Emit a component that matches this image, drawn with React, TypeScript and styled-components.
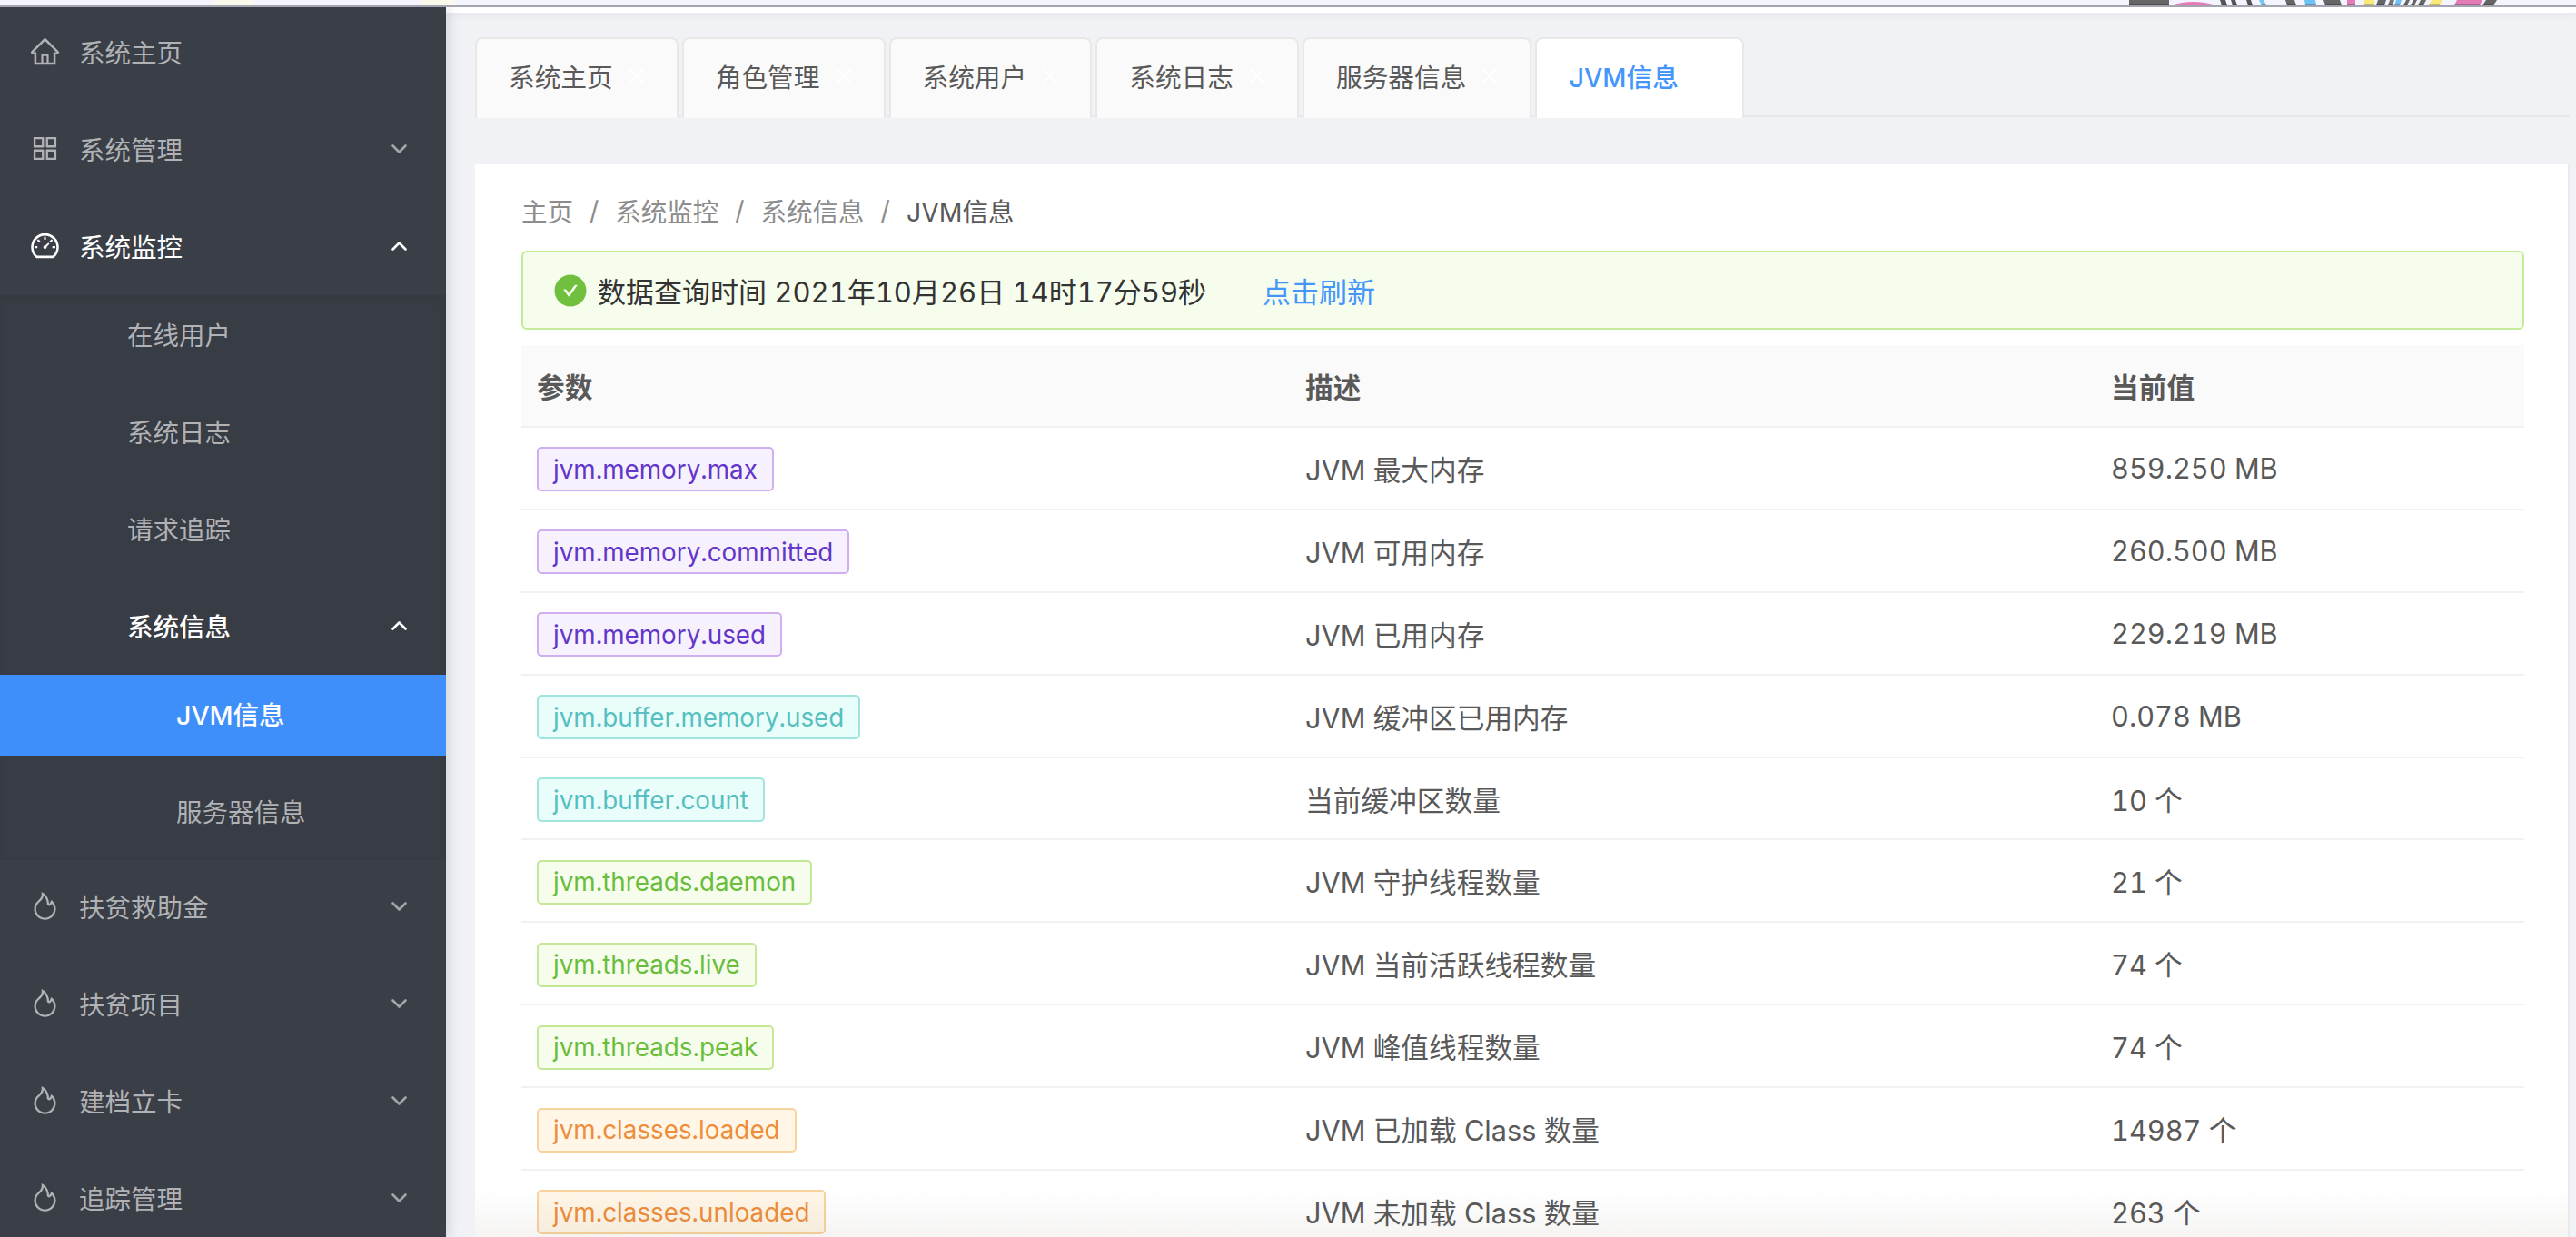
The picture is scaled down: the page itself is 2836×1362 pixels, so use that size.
import React from "react";
import styled, { createGlobalStyle } from "styled-components";
import {
  AiOutlineHome,
  AiOutlineAppstore,
  AiOutlineDashboard,
  AiOutlineFire,
  AiOutlineClose,
  AiFillCheckCircle,
} from "react-icons/ai";

const GlobalStyle = createGlobalStyle`
  html, body { margin: 0; padding: 0; height: 100%; overflow: hidden; }
  body {
    font-family: Inter, "Noto Sans CJK SC", sans-serif;
    font-variant-numeric: tabular-nums;
    background: #f0f2f5;
  }
  * { box-sizing: border-box; }
`;

const Page = styled.div`
  width: 2836px;
  height: 1362px;
  display: flex;
  flex-direction: column;
  overflow: hidden;
`;

const TopStrip = styled.div`
  position: relative;
  height: 8px;
  flex: none;
  border-bottom: 2px solid #a5a5b2;
  background:
    linear-gradient(90deg, transparent 232px, #fbf9ea 240px, #fbf9ea 275px, transparent 282px),
    linear-gradient(90deg, transparent 460px, #fbf9ea 466px, #fbf9ea 498px, transparent 504px),
    #f4f4fe;
  z-index: 3;
`;

const StripArt = styled.svg`
  position: absolute;
  left: 2330px;
  top: 0;
  width: 430px;
  height: 8px;
  display: block;
`;

const Body = styled.div`
  flex: 1;
  min-height: 0;
  display: flex;
`;

const Sidebar = styled.aside`
  width: 491px;
  flex: none;
  background: #3a3e46;
  padding-top: 6px;
  box-shadow: 4px 0 12px rgba(0, 21, 41, 0.12);
  position: relative;
  z-index: 2;
  overflow: hidden;
  font-size: 28.5px;
`;

const Row = styled.div<{ $level?: number; $active?: boolean; $tight?: boolean; $selected?: boolean }>`
  height: 89px;
  display: flex;
  align-items: center;
  padding-left: ${(p) => (p.$level === 3 ? 194 : p.$level === 2 ? 140 : 31)}px;
  padding-right: 43px;
  padding-bottom: 4px;
  margin-bottom: ${(p) => (p.$tight ? 8 : 18)}px;
  color: ${(p) => (p.$active || p.$selected ? "#ffffff" : "#b1b2b5")};
  background: ${(p) => (p.$selected ? "#3e8ffa" : "transparent")};
  font-weight: ${(p) => (p.$selected || (p.$active && p.$level === 2) ? 500 : 400)};
  white-space: nowrap;
`;

const RowIcon = styled.span`
  width: 36px;
  height: 36px;
  margin-right: 20px;
  flex: none;
  display: flex;
  align-items: center;
  justify-content: center;
  font-size: 35px;
`;

const RowLabel = styled.span`
  flex: 1;
`;

const Chevron = styled.svg<{ $up?: boolean; $bright?: boolean }>`
  width: 17px;
  height: 10px;
  flex: none;
  transform: ${(p) => (p.$up ? "rotate(180deg)" : "none")};
  fill: none;
  stroke: ${(p) => (p.$bright ? "#ffffff" : "#a3a5a9")};
  stroke-width: 2.6;
  stroke-linecap: round;
  stroke-linejoin: round;
`;

const SubMenu = styled.div`
  display: flow-root;
  background: #383c44;
  margin-bottom: 8px;
  box-shadow: inset 0 4px 8px rgba(0, 0, 0, 0.06);
`;

const Main = styled.main`
  flex: 1;
  min-width: 0;
  padding: 0 7px 0 32px;
  position: relative;
`;

const HeaderEdge = styled.div`
  height: 6px;
  margin: 0 -7px 27px -32px;
  background: #fff;
  box-shadow: 0 3px 8px rgba(0, 21, 41, 0.06);
`;

const TabBar = styled.div`
  height: 88px;
  display: flex;
  gap: 4px;
  border-bottom: 2px solid #e8e9eb;
`;

const Tab = styled.div<{ $active?: boolean }>`
  position: relative;
  height: 89px;
  flex: none;
  display: flex;
  align-items: center;
  padding: 0 32px 6px 35px;
  border: 2px solid #e8e8e8;
  border-bottom: none;
  border-radius: 8px 8px 0 0;
  background: ${(p) => (p.$active ? "#fff" : "#fafafa")};
  color: ${(p) => (p.$active ? "#4596fb" : "#595959")};
  font-size: 28.7px;
  font-weight: ${(p) => (p.$active ? 500 : 400)};
  white-space: nowrap;
`;

const TabClose = styled.span`
  margin-left: 14px;
  width: 24px;
  height: 24px;
  display: flex;
  align-items: center;
  justify-content: center;
  color: #fff;
  font-size: 24px;
`;

const Card = styled.section`
  position: relative;
  margin-top: 52px;
  height: 1200px;
  background: #fff;
  border-right: 2px solid #e9eaec;
  padding: 32px 48px 0 51px;
`;

const Breadcrumb = styled.nav`
  height: 40px;
  margin-bottom: 23px;
  padding-bottom: 4px;
  display: flex;
  align-items: center;
  font-size: 28.5px;
  color: #8c8c8c;
`;

const Crumb = styled.span<{ $current?: boolean }>`
  color: ${(p) => (p.$current ? "#595959" : "#8c8c8c")};
`;

const Slash = styled.span`
  margin: 0 18px;
  color: #8c8c8c;
`;

const Alert = styled.div`
  height: 87px;
  display: flex;
  align-items: center;
  padding-left: 32px;
  border: 2px solid #c5ea98;
  border-radius: 6px;
  background: #f6fded;
  color: #333;
  font-size: 31px;
  white-space: nowrap;
`;

const AlertIcon = styled.span`
  width: 40px;
  height: 40px;
  margin-right: 10px;
  flex: none;
  display: flex;
  align-items: center;
  justify-content: center;
  color: #70bf3e;
  font-size: 40px;
`;

const RefreshLink = styled.a`
  margin-left: 62px;
  color: #4596fb;
  font-size: 31px;
`;

const Table = styled.div`
  margin-top: 17px;
  font-size: 30.7px;
  color: #595959;
`;

const TableRow = styled.div<{ $head?: boolean }>`
  display: grid;
  grid-template-columns: 846px 887px 1fr;
  align-items: center;
  height: ${(p) => (p.$head ? "91px" : "90.9px")};
  padding-left: 17px;
  border-bottom: 2px solid #f1f1f2;
  background: ${(p) => (p.$head ? "#fafafa" : "transparent")};
  font-weight: ${(p) => (p.$head ? 600 : 400)};
  white-space: nowrap;
`;

const toneMap = {
  purple: { fg: "#6236c8", line: "#d0aef0", bg: "#f7f1fe" },
  cyan: { fg: "#56bfc0", line: "#9fe5dd", bg: "#e9fdfb" },
  green: { fg: "#6abd3c", line: "#c3e997", bg: "#f6fded" },
  orange: { fg: "#ee8e3c", line: "#f9d39d", bg: "#fff6e8" },
};
type Tone = keyof typeof toneMap;

const Tag = styled.span<{ $tone: Tone }>`
  display: inline-flex;
  align-items: center;
  justify-self: start;
  height: 49px;
  margin-top: 3px;
  padding: 0 16px;
  border: 2px solid ${(p) => toneMap[p.$tone].line};
  border-radius: 5px;
  background: ${(p) => toneMap[p.$tone].bg};
  color: ${(p) => toneMap[p.$tone].fg};
  font-size: 27.8px;
`;

const BottomFade = styled.div`
  position: absolute;
  left: 0;
  right: 0;
  top: 1129px;
  height: 52px;
  background: linear-gradient(rgba(60, 40, 20, 0), rgba(60, 40, 20, 0.05));
  pointer-events: none;
`;

const stripes: [number, number, number, string][] = [
  [14, 58, 0, "#666"], [116, 122, -2, "#555"], [128, 133, -2, "#555"], [145, 150, -2, "#555"],
  [160, 165, -3, "#74c4f4"], [188, 198, -2, "#666"], [208, 220, -1, "#6fc2f4"], [230, 248, -2, "#666"],
  [254, 263, 0, "#e37cb4"], [273, 284, 0, "#f9e978"], [286, 295, 2, "#666"], [299, 304, 2, "#777"],
  [306, 312, 2, "#6fc2f4"], [316, 320, 3, "#666"], [324, 328, 3, "#666"], [332, 338, 3, "#666"],
  [344, 356, 3, "#f9e978"], [372, 400, 3, "#e37cb4"], [403, 415, 4, "#666"],
];

const tabs = ["系统主页", "角色管理", "系统用户", "系统日志", "服务器信息"];

const rows: { name: string; tone: Tone; desc: string; value: string }[] = [
  { name: "jvm.memory.max", tone: "purple", desc: "JVM 最大内存", value: "859.250 MB" },
  { name: "jvm.memory.committed", tone: "purple", desc: "JVM 可用内存", value: "260.500 MB" },
  { name: "jvm.memory.used", tone: "purple", desc: "JVM 已用内存", value: "229.219 MB" },
  { name: "jvm.buffer.memory.used", tone: "cyan", desc: "JVM 缓冲区已用内存", value: "0.078 MB" },
  { name: "jvm.buffer.count", tone: "cyan", desc: "当前缓冲区数量", value: "10 个" },
  { name: "jvm.threads.daemon", tone: "green", desc: "JVM 守护线程数量", value: "21 个" },
  { name: "jvm.threads.live", tone: "green", desc: "JVM 当前活跃线程数量", value: "74 个" },
  { name: "jvm.threads.peak", tone: "green", desc: "JVM 峰值线程数量", value: "74 个" },
  { name: "jvm.classes.loaded", tone: "orange", desc: "JVM 已加载 Class 数量", value: "14987 个" },
  { name: "jvm.classes.unloaded", tone: "orange", desc: "JVM 未加载 Class 数量", value: "263 个" },
];

const Arrow = ({ up, bright }: { up?: boolean; bright?: boolean }) => (
  <Chevron viewBox="0 0 17 10" $up={up} $bright={bright}>
    <polyline points="1.5,1.5 8.5,8.5 15.5,1.5" />
  </Chevron>
);

const NavRow = ({
  icon,
  label,
  open,
  closed,
  active,
}: {
  icon: React.ReactNode;
  label: string;
  open?: boolean;
  closed?: boolean;
  active?: boolean;
}) => (
  <Row $active={active} $tight={open}>
    <RowIcon>{icon}</RowIcon>
    <RowLabel>{label}</RowLabel>
    {(open || closed) && <Arrow up={open} bright={open} />}
  </Row>
);

export default function App() {
  return (
    <Page>
      <GlobalStyle />
      <TopStrip>
        <StripArt viewBox="0 0 430 8" preserveAspectRatio="none">
          {stripes.map(([a, b, s, c], i) => (
            <g key={i}>
              <polygon points={`${a + s},0 ${b + s},0 ${b},6 ${a},6`} fill={c} />
              <rect x={a} y="4.5" width={b - a} height="1.5" fill="#000" opacity="0.45" />
            </g>
          ))}
          <path d="M60 6 Q84 -2 110 6 Z" fill="#e37cb4" />
        </StripArt>
      </TopStrip>
      <Body>
        <Sidebar>
          <NavRow icon={<AiOutlineHome />} label="系统主页" />
          <NavRow icon={<AiOutlineAppstore />} label="系统管理" closed />
          <NavRow icon={<AiOutlineDashboard />} label="系统监控" open active />
          <SubMenu>
            <Row $level={2}>在线用户</Row>
            <Row $level={2}>系统日志</Row>
            <Row $level={2}>请求追踪</Row>
            <Row $level={2} $active $tight>
              <RowLabel>系统信息</RowLabel>
              <Arrow up bright />
            </Row>
            <Row $level={3} $selected>JVM信息</Row>
            <Row $level={3} $tight>服务器信息</Row>
          </SubMenu>
          <NavRow icon={<AiOutlineFire />} label="扶贫救助金" closed />
          <NavRow icon={<AiOutlineFire />} label="扶贫项目" closed />
          <NavRow icon={<AiOutlineFire />} label="建档立卡" closed />
          <NavRow icon={<AiOutlineFire />} label="追踪管理" closed />
        </Sidebar>
        <Main>
          <HeaderEdge />
          <TabBar>
            {tabs.map((t) => (
              <Tab key={t}>
                {t}
                <TabClose>
                  <AiOutlineClose />
                </TabClose>
              </Tab>
            ))}
            <Tab $active>
              JVM信息
              <TabClose />
            </Tab>
          </TabBar>
          <Card>
            <Breadcrumb>
              <Crumb>主页</Crumb>
              <Slash>/</Slash>
              <Crumb>系统监控</Crumb>
              <Slash>/</Slash>
              <Crumb>系统信息</Crumb>
              <Slash>/</Slash>
              <Crumb $current>JVM信息</Crumb>
            </Breadcrumb>
            <Alert>
              <AlertIcon>
                <AiFillCheckCircle />
              </AlertIcon>
              数据查询时间 2021年10月26日 14时17分59秒
              <RefreshLink>点击刷新</RefreshLink>
            </Alert>
            <Table>
              <TableRow $head>
                <span>参数</span>
                <span>描述</span>
                <span>当前值</span>
              </TableRow>
              {rows.map((r) => (
                <TableRow key={r.name}>
                  <Tag $tone={r.tone}>{r.name}</Tag>
                  <span>{r.desc}</span>
                  <span>{r.value}</span>
                </TableRow>
              ))}
            </Table>
            <BottomFade />
          </Card>
        </Main>
      </Body>
    </Page>
  );
}
